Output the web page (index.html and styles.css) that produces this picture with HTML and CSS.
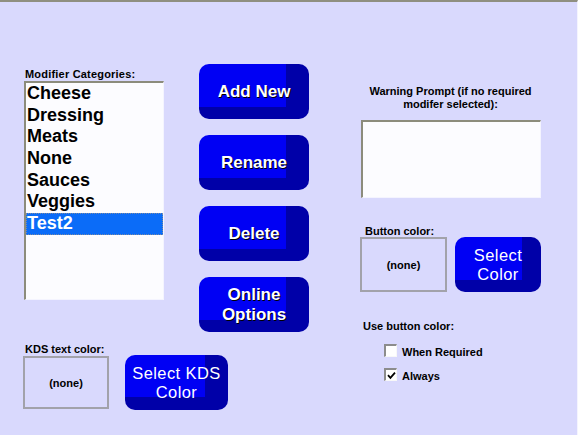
FILE: index.html
```html
<!DOCTYPE html>
<html>
<head>
<meta charset="utf-8">
<link rel="stylesheet" href="styles.css">
</head>
<body>
<div class="page">
  <div class="left">
    <div class="top">
      <div class="listcol">
        <div class="label lbl-mod">Modifier Categories:</div>
        <div class="list">
          <div class="item">Cheese</div>
          <div class="item">Dressing</div>
          <div class="item">Meats</div>
          <div class="item">None</div>
          <div class="item">Sauces</div>
          <div class="item">Veggies</div>
          <div class="item selected">Test2</div>
        </div>
      </div>
      <div class="btncol">
        <button class="btn">Add New</button>
        <button class="btn">Rename</button>
        <button class="btn">Delete</button>
        <button class="btn btn-two">Online<br>Options</button>
      </div>
    </div>
    <div class="kds">
      <div class="kdscol">
        <div class="label lbl-kds">KDS text color:</div>
        <div class="swatch kds-swatch">(none)</div>
      </div>
      <button class="btn btn-select btn-kds">Select KDS<br>Color</button>
    </div>
  </div>
  <div class="right">
    <div class="label warn-lbl">Warning Prompt (if no required<br>modifer selected):</div>
    <div class="warn-box"></div>
    <div class="bc-grid">
      <div class="label bc-lbl">Button color:</div>
      <div class="swatch bc-swatch">(none)</div>
      <button class="btn btn-select btn-color">Select<br>Color</button>
    </div>
    <div class="label use-lbl">Use button color:</div>
    <div class="checks">
      <div class="check-row"><span class="cb"></span><span class="label">When Required</span></div>
      <div class="check-row"><span class="cb"><svg viewBox="0 0 9 9" width="9" height="9"><path d="M1 4.2 L3.4 6.8 L8 1.6" fill="none" stroke="#000" stroke-width="1.8"/></svg></span><span class="label">Always</span></div>
    </div>
  </div>
</div>
</body>
</html>
```

FILE: styles.css
```css
html, body {
  margin: 0;
  padding: 0;
  background: #d9d9fd;
}

.page {
  width: 578px;
  height: 435px;
  box-sizing: border-box;
  border-top: 2px solid #8f8f80;
  border-right: 1px solid #f4f4ff;
  background: #d9d9fd;
  display: flex;
  align-items: flex-start;
  font-family: "Liberation Sans", Arial, sans-serif;
  overflow: hidden;
}

.label {
  font-size: 11px;
  font-weight: bold;
  line-height: 13px;
  color: #000;
  white-space: nowrap;
}

.left {
  margin-left: 23px;
  margin-top: 62px;
  display: flex;
  flex-direction: column;
}

.top {
  display: flex;
  align-items: flex-start;
}

.listcol {
  margin-left: 1px;
  margin-top: 4px;
  width: 140px;
}

.lbl-mod {
  padding-left: 1px;
  letter-spacing: 0.2px;
}

.list {
  width: 140px;
  height: 219px;
  box-sizing: border-box;
  background: #fcfcff;
  border-style: solid;
  border-width: 2px 1px 1px 2px;
  border-color: #8c8c7c #f4f4ff #f4f4ff #8c8c7c;
}

.item {
  font-size: 18px;
  font-weight: bold;
  line-height: 21.67px;
  height: 21.67px;
  padding-left: 1px;
  color: #000;
}

.item.selected {
  background: #0b6cf8;
  color: #fff;
  outline: 1px dotted #7d8aa0;
  outline-offset: -1px;
}

.btncol {
  margin-left: 35px;
  display: flex;
  flex-direction: column;
  gap: 16px;
}

.btn {
  border: 0;
  padding: 0;
  margin: 0;
  width: 110px;
  height: 55px;
  border-radius: 10px;
  background: linear-gradient(#0000f4, #0000f4) 0 0 / calc(100% - 23px) calc(100% - 12px) no-repeat, #0000a8;
  color: #fff;
  font-family: "Liberation Sans", Arial, sans-serif;
  font-size: 17px;
  font-weight: bold;
  line-height: 20px;
  text-align: center;
  text-shadow: 1px 1px 0 #000;
}

.btn-select {
  font-weight: normal;
  font-size: 16.5px;
  letter-spacing: 0.4px;
  line-height: 18.5px;
  text-shadow: none;
  height: 55px;
}

.kds {
  display: flex;
  align-items: flex-start;
  margin-top: 11px;
}

.lbl-kds {
  padding-left: 2px;
}

.swatch {
  box-sizing: border-box;
  border: 2px solid #a2a2aa;
  display: flex;
  align-items: center;
  justify-content: center;
  font-size: 11px;
  font-weight: bold;
  color: #000;
}

.kds-swatch {
  width: 86px;
  height: 53px;
}

.btn-kds {
  width: 103px;
  margin-left: 16px;
  margin-top: 12px;
  background-size: calc(100% - 23px) calc(100% - 13px), auto;
}

.right {
  margin-left: 51px;
  margin-top: 83px;
  width: 181px;
  display: flex;
  flex-direction: column;
}

.warn-lbl {
  text-align: center;
}

.warn-box {
  margin-top: 9px;
  margin-left: 1px;
  width: 180px;
  height: 78px;
  box-sizing: border-box;
  background: #fcfcff;
  border-style: solid;
  border-width: 2px 1px 1px 2px;
  border-color: #8c8c7c #f4f4ff #f4f4ff #8c8c7c;
}

.bc-grid {
  margin-top: 28px;
  display: grid;
  grid-template-columns: 87px 86px;
  column-gap: 8px;
}

.bc-lbl {
  grid-column: 1 / 3;
  line-height: 11px;
  padding-left: 5px;
}

.bc-swatch {
  height: 55px;
}

.btn-color {
  width: 86px;
  background-size: calc(100% - 19px) calc(100% - 12px), auto;
}

.use-lbl {
  margin-top: 28px;
  padding-left: 3px;
}

.checks {
  margin-top: 11px;
  padding-left: 24px;
  display: flex;
  flex-direction: column;
  gap: 11px;
}

.check-row {
  display: flex;
  align-items: center;
  gap: 5px;
  height: 13px;
}

.check-row .label {
  position: relative;
  top: 2px;
}

.cb {
  width: 13px;
  height: 13px;
  box-sizing: border-box;
  background: #fff;
  border-style: solid;
  border-width: 2px 1px 1px 2px;
  border-color: #8c8c8c #f8f8f8 #f8f8f8 #8c8c8c;
  display: flex;
  align-items: center;
  justify-content: center;
}

.cb svg {
  display: block;
}
```
